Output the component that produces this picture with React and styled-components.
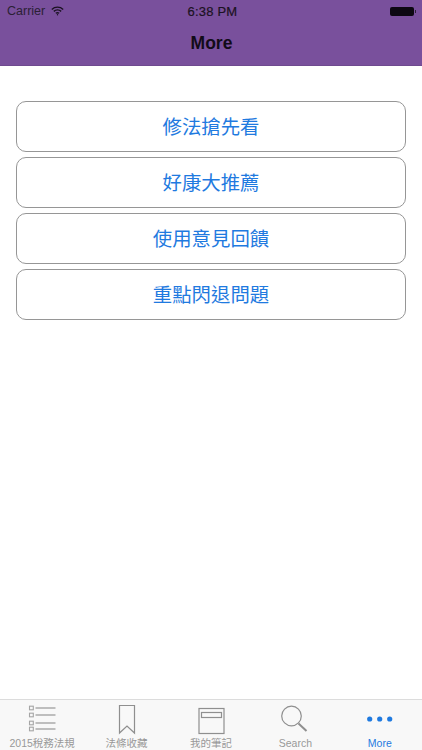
import React from 'react';
import styled, { createGlobalStyle } from 'styled-components';

const GlobalStyle = createGlobalStyle`
  html, body {
    margin: 0;
    padding: 0;
    background: #fff;
  }
  * {
    box-sizing: border-box;
  }
`;

const font = `"Liberation Sans", "Noto Sans CJK TC", sans-serif`;

const Screen = styled.div`
  display: flex;
  flex-direction: column;
  width: 422px;
  height: 750px;
  overflow: hidden;
  background: #fff;
  font-family: ${font};
`;

const Header = styled.header`
  display: flex;
  flex-direction: column;
  height: 66px;
  flex-shrink: 0;
  background: #79509c;
  border-bottom: 1px solid #6f4a8f;
`;

const StatusBar = styled.div`
  display: grid;
  grid-template-columns: 1fr auto 1fr;
  align-items: center;
  height: 22px;
  padding: 0 6px 0 7px;
  color: #1b1222;
  font-size: 12.5px;
`;

const Carrier = styled.div`
  display: flex;
  align-items: center;
  gap: 6px;
  color: #2b1f35;
`;

const Clock = styled.div`
  margin-left: 2px;
  font-size: 13px;
  letter-spacing: 0.2px;
  -webkit-text-stroke: 0.2px #1b1222;
`;

const Battery = styled.div`
  justify-self: end;
  display: flex;
  align-items: center;
  gap: 1px;
`;

const BatteryBody = styled.div`
  width: 24px;
  height: 9px;
  background: #0d0812;
  border-radius: 2px;
`;

const BatteryTip = styled.div`
  width: 1.5px;
  height: 3px;
  background: #2b1f35;
`;

const Title = styled.h1`
  flex: 1;
  display: flex;
  align-items: center;
  justify-content: center;
  margin: 0;
  padding-left: 1px;
  font-size: 17.5px;
  font-weight: 700;
  color: #120b18;
`;

const Content = styled.main`
  flex: 1;
  display: flex;
  flex-direction: column;
  gap: 5px;
  padding: 35px 16px 0;
`;

const MenuButton = styled.button`
  height: 51px;
  padding: 0 0 3px;
  background: #fff;
  border: 1.5px solid #969696;
  border-radius: 10px;
  color: #1f7ae0;
  font-family: ${font};
  font-size: 19.4px;
`;

const TabBar = styled.nav`
  display: grid;
  grid-template-columns: repeat(5, 1fr);
  height: 51px;
  flex-shrink: 0;
  background: #f8f8f8;
  border-top: 1px solid #dcdcdc;
`;

const Tab = styled.div`
  display: flex;
  flex-direction: column;
  align-items: center;
  color: ${(props) => (props.$active ? '#1f7ae0' : '#999')};
`;

const TabIcon = styled.svg`
  display: block;
  flex-shrink: 0;
  width: 40px;
  height: 37px;
`;

const TabLabel = styled.span`
  font-size: 10.5px;
  line-height: 13px;
  height: 13px;
  white-space: nowrap;
`;

function WifiIcon() {
  return (
    <svg width="13" height="10" viewBox="0 0 13 10" fill="none" stroke="#1b1222" strokeWidth="1.4">
      <path d="M0.8 3.4C4 0.4 9 0.4 12.2 3.4" />
      <path d="M2.8 5.4C4.9 3.6 8.1 3.6 10.2 5.4" />
      <path d="M4.8 7.3C5.8 6.6 7.2 6.6 8.2 7.3" />
      <circle cx="6.5" cy="8.8" r="0.7" fill="#1b1222" stroke="none" />
    </svg>
  );
}

function ListIcon() {
  const rows = [8, 15, 23, 29];
  return (
    <TabIcon viewBox="0 0 40 37" fill="none" stroke="#8f8f8f" strokeWidth="1.1">
      {rows.map((y) => (
        <g key={y}>
          <rect x="7.5" y={y - 1.8} width="3.8" height="3.6" stroke="#a5a5a5" />
          <line x1="13.5" y1={y} x2="33.5" y2={y} />
        </g>
      ))}
    </TabIcon>
  );
}

function BookmarkIcon() {
  return (
    <TabIcon viewBox="0 0 40 37" fill="none" stroke="#8f8f8f" strokeWidth="1.2">
      <path d="M12.5 5.5H27.5V33L20 26L12.5 33Z" />
    </TabIcon>
  );
}

function NoteIcon() {
  return (
    <TabIcon viewBox="0 0 40 37" fill="none" stroke="#8f8f8f" strokeWidth="1.2">
      <rect x="8" y="8.5" width="25" height="25" />
      <rect x="10.5" y="12.5" width="20" height="5" />
    </TabIcon>
  );
}

function SearchIcon() {
  return (
    <TabIcon viewBox="0 0 40 37" fill="none" stroke="#8f8f8f" strokeWidth="1.2">
      <circle cx="16.5" cy="16" r="9.8" />
      <line x1="23.5" y1="23.5" x2="31.5" y2="31" strokeWidth="2" />
    </TabIcon>
  );
}

function DotsIcon() {
  return (
    <TabIcon viewBox="0 0 40 37" fill="#1f7ae0">
      <circle cx="9.7" cy="19" r="2.6" />
      <circle cx="19.7" cy="19" r="2.6" />
      <circle cx="29.7" cy="19" r="2.6" />
    </TabIcon>
  );
}

const buttons = ['修法搶先看', '好康大推薦', '使用意見回饋', '重點閃退問題'];

const tabs = [
  { label: '2015稅務法規', icon: <ListIcon /> },
  { label: '法條收藏', icon: <BookmarkIcon /> },
  { label: '我的筆記', icon: <NoteIcon /> },
  { label: 'Search', icon: <SearchIcon /> },
  { label: 'More', icon: <DotsIcon />, active: true },
];

export default function App() {
  return (
    <>
      <GlobalStyle />
      <Screen>
        <Header>
          <StatusBar>
            <Carrier>
              Carrier
              <WifiIcon />
            </Carrier>
            <Clock>6:38 PM</Clock>
            <Battery>
              <BatteryBody />
              <BatteryTip />
            </Battery>
          </StatusBar>
          <Title>More</Title>
        </Header>
        <Content>
          {buttons.map((text) => (
            <MenuButton key={text}>{text}</MenuButton>
          ))}
        </Content>
        <TabBar>
          {tabs.map((tab) => (
            <Tab key={tab.label} $active={tab.active}>
              {tab.icon}
              <TabLabel>{tab.label}</TabLabel>
            </Tab>
          ))}
        </TabBar>
      </Screen>
    </>
  );
}
